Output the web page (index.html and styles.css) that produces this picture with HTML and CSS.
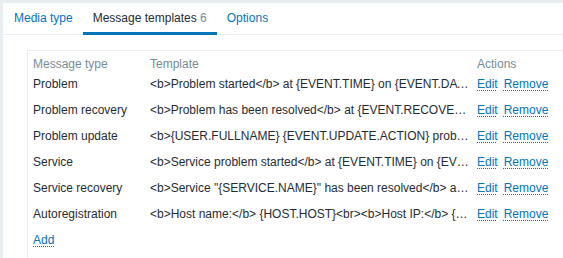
FILE: index.html
```html
<!DOCTYPE html>
<html>
<head>
    <meta charset="UTF-8">
    <meta name="viewport" content="width=device-width, initial-scale=1.0">
    <title>Message templates</title>
    <link rel="stylesheet" href="styles.css">
</head>
<body>
    <div class="container">
        <ul class="tabs">
            <li><a href="#">Media type</a></li>
            <li class="active"><a href="#">Message templates <span class="count">6</span></a></li>
            <li><a href="#">Options</a></li>
        </ul>

        <div class="tab-content">
            <div class="box">
                <table class="list">
                    <colgroup>
                        <col class="col-type">
                        <col class="col-template">
                        <col class="col-actions">
                    </colgroup>
                    <thead>
                        <tr>
                            <th>Message type</th>
                            <th>Template</th>
                            <th>Actions</th>
                        </tr>
                    </thead>
                    <tbody>
                        <tr>
                            <td>Problem</td>
                            <td class="template">&lt;b&gt;Problem started&lt;/b&gt; at {EVENT.TIME} on {EVENT.DATE}&lt;br&gt;&lt;b&gt;Problem name:&lt;/b&gt; {EVENT.NAME}</td>
                            <td class="actions"><a href="#">Edit</a><a href="#">Remove</a></td>
                        </tr>
                        <tr>
                            <td>Problem recovery</td>
                            <td class="template">&lt;b&gt;Problem has been resolved&lt;/b&gt; at {EVENT.RECOVERY.TIME} on {EVENT.RECOVERY.DATE}</td>
                            <td class="actions"><a href="#">Edit</a><a href="#">Remove</a></td>
                        </tr>
                        <tr>
                            <td>Problem update</td>
                            <td class="template">&lt;b&gt;{USER.FULLNAME} {EVENT.UPDATE.ACTION} problem&lt;/b&gt; at {EVENT.UPDATE.DATE}</td>
                            <td class="actions"><a href="#">Edit</a><a href="#">Remove</a></td>
                        </tr>
                        <tr>
                            <td>Service</td>
                            <td class="template">&lt;b&gt;Service problem started&lt;/b&gt; at {EVENT.TIME} on {EVENT.DATE}&lt;br&gt;</td>
                            <td class="actions"><a href="#">Edit</a><a href="#">Remove</a></td>
                        </tr>
                        <tr>
                            <td>Service recovery</td>
                            <td class="template">&lt;b&gt;Service "{SERVICE.NAME}" has been resolved&lt;/b&gt; at {EVENT.RECOVERY.TIME}</td>
                            <td class="actions"><a href="#">Edit</a><a href="#">Remove</a></td>
                        </tr>
                        <tr>
                            <td>Autoregistration</td>
                            <td class="template">&lt;b&gt;Host name:&lt;/b&gt; {HOST.HOST}&lt;br&gt;&lt;b&gt;Host IP:&lt;/b&gt; {HOST.IP}</td>
                            <td class="actions"><a href="#">Edit</a><a href="#">Remove</a></td>
                        </tr>
                        <tr>
                            <td colspan="3"><a href="#">Add</a></td>
                        </tr>
                    </tbody>
                </table>
            </div>
        </div>
    </div>
</body>
</html>
```

FILE: styles.css
```css
html, body {
    overflow: hidden;
}
body {
    margin: 0;
    padding: 3px 0 0 3px;
    background-color: #ebeef0;
    font-family: "Liberation Sans", Arial, sans-serif;
    font-size: 12px;
    color: #1f2c33;
}
.container {
    background: white;
    width: 620px;
    height: 400px;
}
a {
    color: #0275b8;
    text-decoration: none;
}
.tabs {
    display: flex;
    margin: 0;
    padding: 0 0 0 1px;
    list-style: none;
    border-bottom: 1px solid #ebeef0;
}
.tabs li {
    position: relative;
}
.tabs a {
    display: block;
    padding: 0 10px;
    line-height: 31px;
}
.tabs .active a {
    color: #1f2c33;
}
.tabs .active::after {
    content: "";
    position: absolute;
    left: 0;
    right: 0;
    bottom: -1px;
    height: 3px;
    background: #0275b8;
}
.count {
    color: #768d99;
}
.tab-content {
    padding: 15px 0 0 24px;
}
.box {
    border: 1px solid #ebeef0;
    width: 580px;
    height: 300px;
}
.list {
    border-collapse: collapse;
    table-layout: fixed;
    width: 580px;
}
.col-type {
    width: 117px;
}
.col-template {
    width: 327px;
}
.list th {
    text-align: left;
    font-weight: normal;
    color: #768d99;
    padding: 6px 2px 0 5px;
    line-height: 14px;
}
.list td {
    padding: 6px 2px 6px 5px;
    line-height: 14px;
    white-space: nowrap;
}
.template {
    overflow: hidden;
    text-overflow: ellipsis;
}
.list td a {
    text-decoration: underline dotted;
    text-decoration-thickness: 1px;
    text-underline-offset: 2px;
}
.actions a + a {
    margin-left: 6px;
}
```
